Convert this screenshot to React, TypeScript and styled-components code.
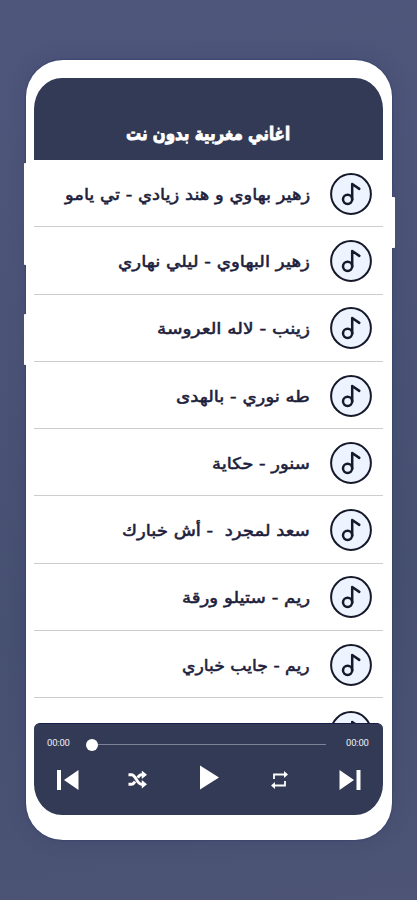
import React, { useLayoutEffect, useRef, useState } from 'react';
import styled, { createGlobalStyle } from 'styled-components';

const GlobalStyle = createGlobalStyle`
  *, *::before, *::after { box-sizing: border-box; }
  body { margin: 0; background: #4b5476; }
`;

const Backdrop = styled.main`
  width: 417px;
  height: 900px;
  padding: 60px 25px 60px 26px;
  overflow: hidden;
  background: linear-gradient(170deg, #4f567b 0%, #4b5476 35%, #465071 65%, #4d5475 100%);
`;

const Phone = styled.div`
  position: relative;
  height: 780px;
  padding: 18px 9px 25px 8px;
  border-radius: 37px;
  background: #fff;
  box-shadow: 0 0 2px #26315f, 0 0 18px rgba(45, 55, 95, 0.25);
`;

const SideKey = styled.span<{ $side: 'left' | 'right'; $top: number; $length: number }>`
  position: absolute;
  ${(p) => p.$side}: -2.5px;
  top: ${(p) => p.$top}px;
  width: 5px;
  height: ${(p) => p.$length}px;
  border-radius: 1px;
  background: #fff;
`;

const Screen = styled.div`
  display: flex;
  flex-direction: column;
  height: 737px;
  border-radius: 28px / 31px;
  overflow: hidden;
  background: #fff;
`;

const Header = styled.header`
  display: flex;
  flex: none;
  justify-content: center;
  height: 82px;
  padding-top: 43px;
  background: #333a55;
  color: #fff;
`;

const List = styled.ul`
  flex: 1;
  min-height: 0;
  margin: 0;
  padding: 0;
  list-style: none;
  overflow: hidden;
  direction: rtl;
`;

const Row = styled.li`
  display: flex;
  align-items: center;
  gap: 20px;
  height: 67.3px;
  padding: 1px 11px 0 0;
  border-bottom: 1.5px solid #cdcdcf;
  color: #1d1e3c;
`;

const FitBox = styled.span<{ $width: number; $size: number; $bold?: boolean }>`
  display: block;
  flex: none;
  width: ${(p) => p.$width}px;
  height: 24px;
  direction: rtl;
  font: ${(p) => (p.$bold ? 700 : 400)} ${(p) => p.$size}px/26px 'DejaVu Sans', sans-serif;
  -webkit-text-stroke: ${(p) => (p.$bold ? '0.9px' : '0.55px')} currentColor;
`;

const FitText = styled.span`
  display: inline-block;
  white-space: pre;
  transform-origin: right center;
`;

// Condenses or widens a line of text so it fills the given width.
function Fit({ text, width, size, bold }: { text: string; width: number; size: number; bold?: boolean }) {
  const ref = useRef<HTMLSpanElement>(null);
  const [scale, setScale] = useState(1);
  useLayoutEffect(() => {
    if (ref.current) setScale(width / ref.current.offsetWidth);
  }, [text, width]);
  return (
    <FitBox $width={width} $size={size} $bold={bold}>
      <FitText ref={ref} style={{ transform: `scaleX(${scale})` }}>{text}</FitText>
    </FitBox>
  );
}

const NoteSvg = styled.svg`
  display: block;
  flex: none;
  width: 42px;
  height: 42px;
`;

const NoteIcon = () => (
  <NoteSvg viewBox="0 0 42 42" fill="none" stroke="#161929" strokeWidth="2">
    <circle cx="21" cy="21" r="19.9" fill="#edf3ff" />
    <circle cx="17.6" cy="26.3" r="4.6" strokeWidth="2.5" />
    <path d="M22.2 26.5V11L29.3 15.9" strokeWidth="2.5" strokeLinecap="round" strokeLinejoin="round" />
  </NoteSvg>
);

const Player = styled.footer`
  flex: none;
  height: 92px;
  border-top: 1.5px solid #171d46;
  border-radius: 6px 6px 0 0;
  background: #333a55;
  position: relative;
`;

const Progress = styled.div`
  display: flex;
  align-items: center;
  height: 14px;
  margin-top: 12px;
  padding: 0 13px;
`;

const Time = styled.span`
  width: 24px;
  color: #eceef3;
  font: 9.5px/14px Roboto, sans-serif;
  letter-spacing: -0.2px;
  white-space: nowrap;
`;

const Track = styled.div`
  display: flex;
  align-items: center;
  width: 240px;
  height: 12px;
  margin: 3px 20px 0 15px;
`;

const Knob = styled.span`
  flex: none;
  width: 12px;
  height: 12px;
  border-radius: 50%;
  background: #fff;
`;

const Line = styled.span`
  flex: 1;
  height: 1.5px;
  background: #7d8295;
`;

const Controls = styled.div`
  display: flex;
  align-items: center;
  justify-content: space-between;
  height: 28px;
  margin-top: 16px;
  padding: 0 22px 0 23px;
`;

const Control = styled.button<{ $width: number; $lift?: number; $shift?: number }>`
  display: block;
  width: ${(p) => p.$width}px;
  padding: 0;
  margin: 0 ${(p) => p.$shift ?? 0}px ${(p) => p.$lift ?? 0}px ${(p) => -(p.$shift ?? 0)}px;
  border: 0;
  background: none;
  color: #fff;
  svg { display: block; width: 100%; }
`;

const songs = [
  { title: 'زهير بهاوي و هند زيادي - تي يامو', width: 245 },
  { title: 'زهير البهاوي - ليلي نهاري', width: 192 },
  { title: 'زينب - لاله العروسة', width: 153 },
  { title: 'طه نوري - بالهدى', width: 134 },
  { title: 'سنور - حكاية', width: 98 },
  { title: 'سعد لمجرد  - أش خبارك', width: 188 },
  { title: 'ريم - ستيلو ورقة', width: 128 },
  { title: 'ريم - جايب خباري', width: 128 },
];

export default function App() {
  return (
    <>
      <GlobalStyle />
      <Backdrop>
        <Phone>
          <SideKey $side="left" $top={103} $length={102} />
          <SideKey $side="left" $top={254} $length={51} />
          <SideKey $side="right" $top={137} $length={51} />
          <Screen>
            <Header>
              <Fit text="اغاني مغربية بدون نت" width={164} size={18} bold />
            </Header>
            <List>
              {songs.map((song) => (
                <Row key={song.title}>
                  <NoteIcon />
                  <Fit text={song.title} width={song.width} size={16} />
                </Row>
              ))}
              <Row>
                <NoteIcon />
              </Row>
            </List>
            <Player>
              <Progress>
                <Time>00:00</Time>
                <Track>
                  <Knob />
                  <Line />
                </Track>
                <Time>00:00</Time>
              </Progress>
              <Controls>
                <Control $width={22} aria-label="previous">
                  <svg viewBox="0 0 22 22" fill="currentColor"><path d="M0 1h4v20H0zM21.5 1v20L7 11z" /></svg>
                </Control>
                <Control $width={19} $shift={2} aria-label="shuffle">
                  <svg viewBox="0 0 20 18" fill="none" stroke="currentColor" strokeWidth="3">
                    <path d="M0.5 4h3.2c4.3 0 6 10 10.3 10h2M0.5 14h3.2c1.5 0 2.5-1 3.7-3M10.3 7c1.2-2 2.2-3 3.7-3h2" />
                    <path d="M14.5-0.5L20 4l-5.500 4.500zM14.500 9.500L20 14l-5.500 4.500z" fill="currentColor" stroke="none" />
                  </svg>
                </Control>
                <Control $width={20} $lift={6} $shift={1} aria-label="play">
                  <svg viewBox="0 0 20 25" fill="currentColor"><path d="M1 0.5v24L20 12.5z" /></svg>
                </Control>
                <Control $width={17} aria-label="repeat">
                  <svg viewBox="0 0 17 18" fill="none" stroke="currentColor" strokeWidth="1.8">
                    <path d="M3 8V3.500H14M14 10v4.500H3" />
                    <path d="M13 0l4 3.500-4 3.500zM4 11l-4 3.500L4 18z" fill="currentColor" stroke="none" />
                  </svg>
                </Control>
                <Control $width={22} aria-label="next">
                  <svg viewBox="0 0 22 22" fill="currentColor"><path d="M17.5 1h4v20h-4zM0.500 1v20L15 11z" /></svg>
                </Control>
              </Controls>
            </Player>
          </Screen>
        </Phone>
      </Backdrop>
    </>
  );
}
